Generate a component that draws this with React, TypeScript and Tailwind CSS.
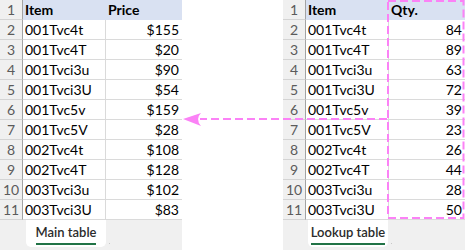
import React from 'react';

interface Row {
  item: string;
  value: string;
}

interface SheetProps {
  valueHeader: string;
  rows: Row[];
  tab: string;
  tabOffset: string;
}

const mainRows: Row[] = [
  { item: '001Tvc4t', value: '$155' },
  { item: '001Tvc4T', value: '$20' },
  { item: '001Tvci3u', value: '$90' },
  { item: '001Tvci3U', value: '$54' },
  { item: '001Tvc5v', value: '$159' },
  { item: '001Tvc5V', value: '$28' },
  { item: '002Tvc4t', value: '$108' },
  { item: '002Tvc4T', value: '$128' },
  { item: '003Tvci3u', value: '$102' },
  { item: '003Tvci3U', value: '$83' },
];

const lookupRows: Row[] = [
  { item: '001Tvc4t', value: '84' },
  { item: '001Tvc4T', value: '89' },
  { item: '001Tvci3u', value: '63' },
  { item: '001Tvci3U', value: '72' },
  { item: '001Tvc5v', value: '39' },
  { item: '001Tvc5V', value: '23' },
  { item: '002Tvc4t', value: '26' },
  { item: '002Tvc4T', value: '44' },
  { item: '003Tvci3u', value: '28' },
  { item: '003Tvci3U', value: '50' },
];

const rowNum = 'h-[20px] bg-[#f0f0f0] border-r border-b border-r-[#a3a3a3] border-b-[#d4d4d4] text-center leading-[19px] text-[#5b5b5b]';

const Sheet: React.FC<SheetProps> = ({ valueHeader, rows, tab, tabOffset }) => (
  <div className="w-[182px] flex flex-col">
    <div className="grid grid-cols-[23px_83px_76px]">
      {/* header row */}
      <div className={rowNum}>1</div>
      <div className="h-[20px] bg-[#d9e1f2] pl-[2px] leading-[20px] font-bold">Item</div>
      <div className="h-[20px] bg-[#d9e1f2] pl-[2px] leading-[20px] font-bold">{valueHeader}</div>
      {rows.map((r, i) => (
        <React.Fragment key={i}>
          <div className={rowNum}>{i + 2}</div>
          <div className="h-[20px] border-r border-b border-[#dadada] pl-[2px] leading-[19px]">{r.item}</div>
          <div className="h-[20px] border-b border-[#dadada] pr-[3px] text-right leading-[19px]">{r.value}</div>
        </React.Fragment>
      ))}
    </div>
    <div className={`h-[30px] bg-[#f0f0f0] flex items-start ${tabOffset}`}>
      <div className="w-[80px] h-[27px] bg-white rounded-b-[5px] flex justify-center pt-[5px]">
        <span className="block h-[20px] border-b-2 border-[#217346] text-[13px] font-semibold leading-[15px] text-[#2b2b2b]">
          {tab}
        </span>
      </div>
      <span className="ml-[3px] mt-[23px] w-[1px] h-[1px] bg-[#c8c8c8]" />
    </div>
  </div>
);

export default function App() {
  return (
    <div
      className="relative w-[465px] h-[250px] bg-white flex justify-between text-[14px] text-black overflow-hidden"
      style={{ fontFamily: 'Lato, "Liberation Sans", sans-serif' }}
    >
      <Sheet valueHeader="Price" rows={mainRows} tab="Main table" tabOffset="pl-[26px]" />
      <Sheet valueHeader="Qty." rows={lookupRows} tab="Lookup table" tabOffset="pl-[25px]" />

      {/* lookup annotation */}
      <svg className="absolute inset-0 pointer-events-none" width="465" height="250" viewBox="0 0 465 250">
        <rect x="388" y="1" width="75.5" height="217" fill="none" stroke="#fb82f6" strokeWidth="2" strokeDasharray="8 4" />
        <line x1="387" y1="119" x2="200" y2="119" stroke="#fb82f6" strokeWidth="2" strokeDasharray="8 4" />
        <path d="M183 119 L201 113 Q195 119 201 126 Z" fill="#fb82f6" />
      </svg>
    </div>
  );
}
